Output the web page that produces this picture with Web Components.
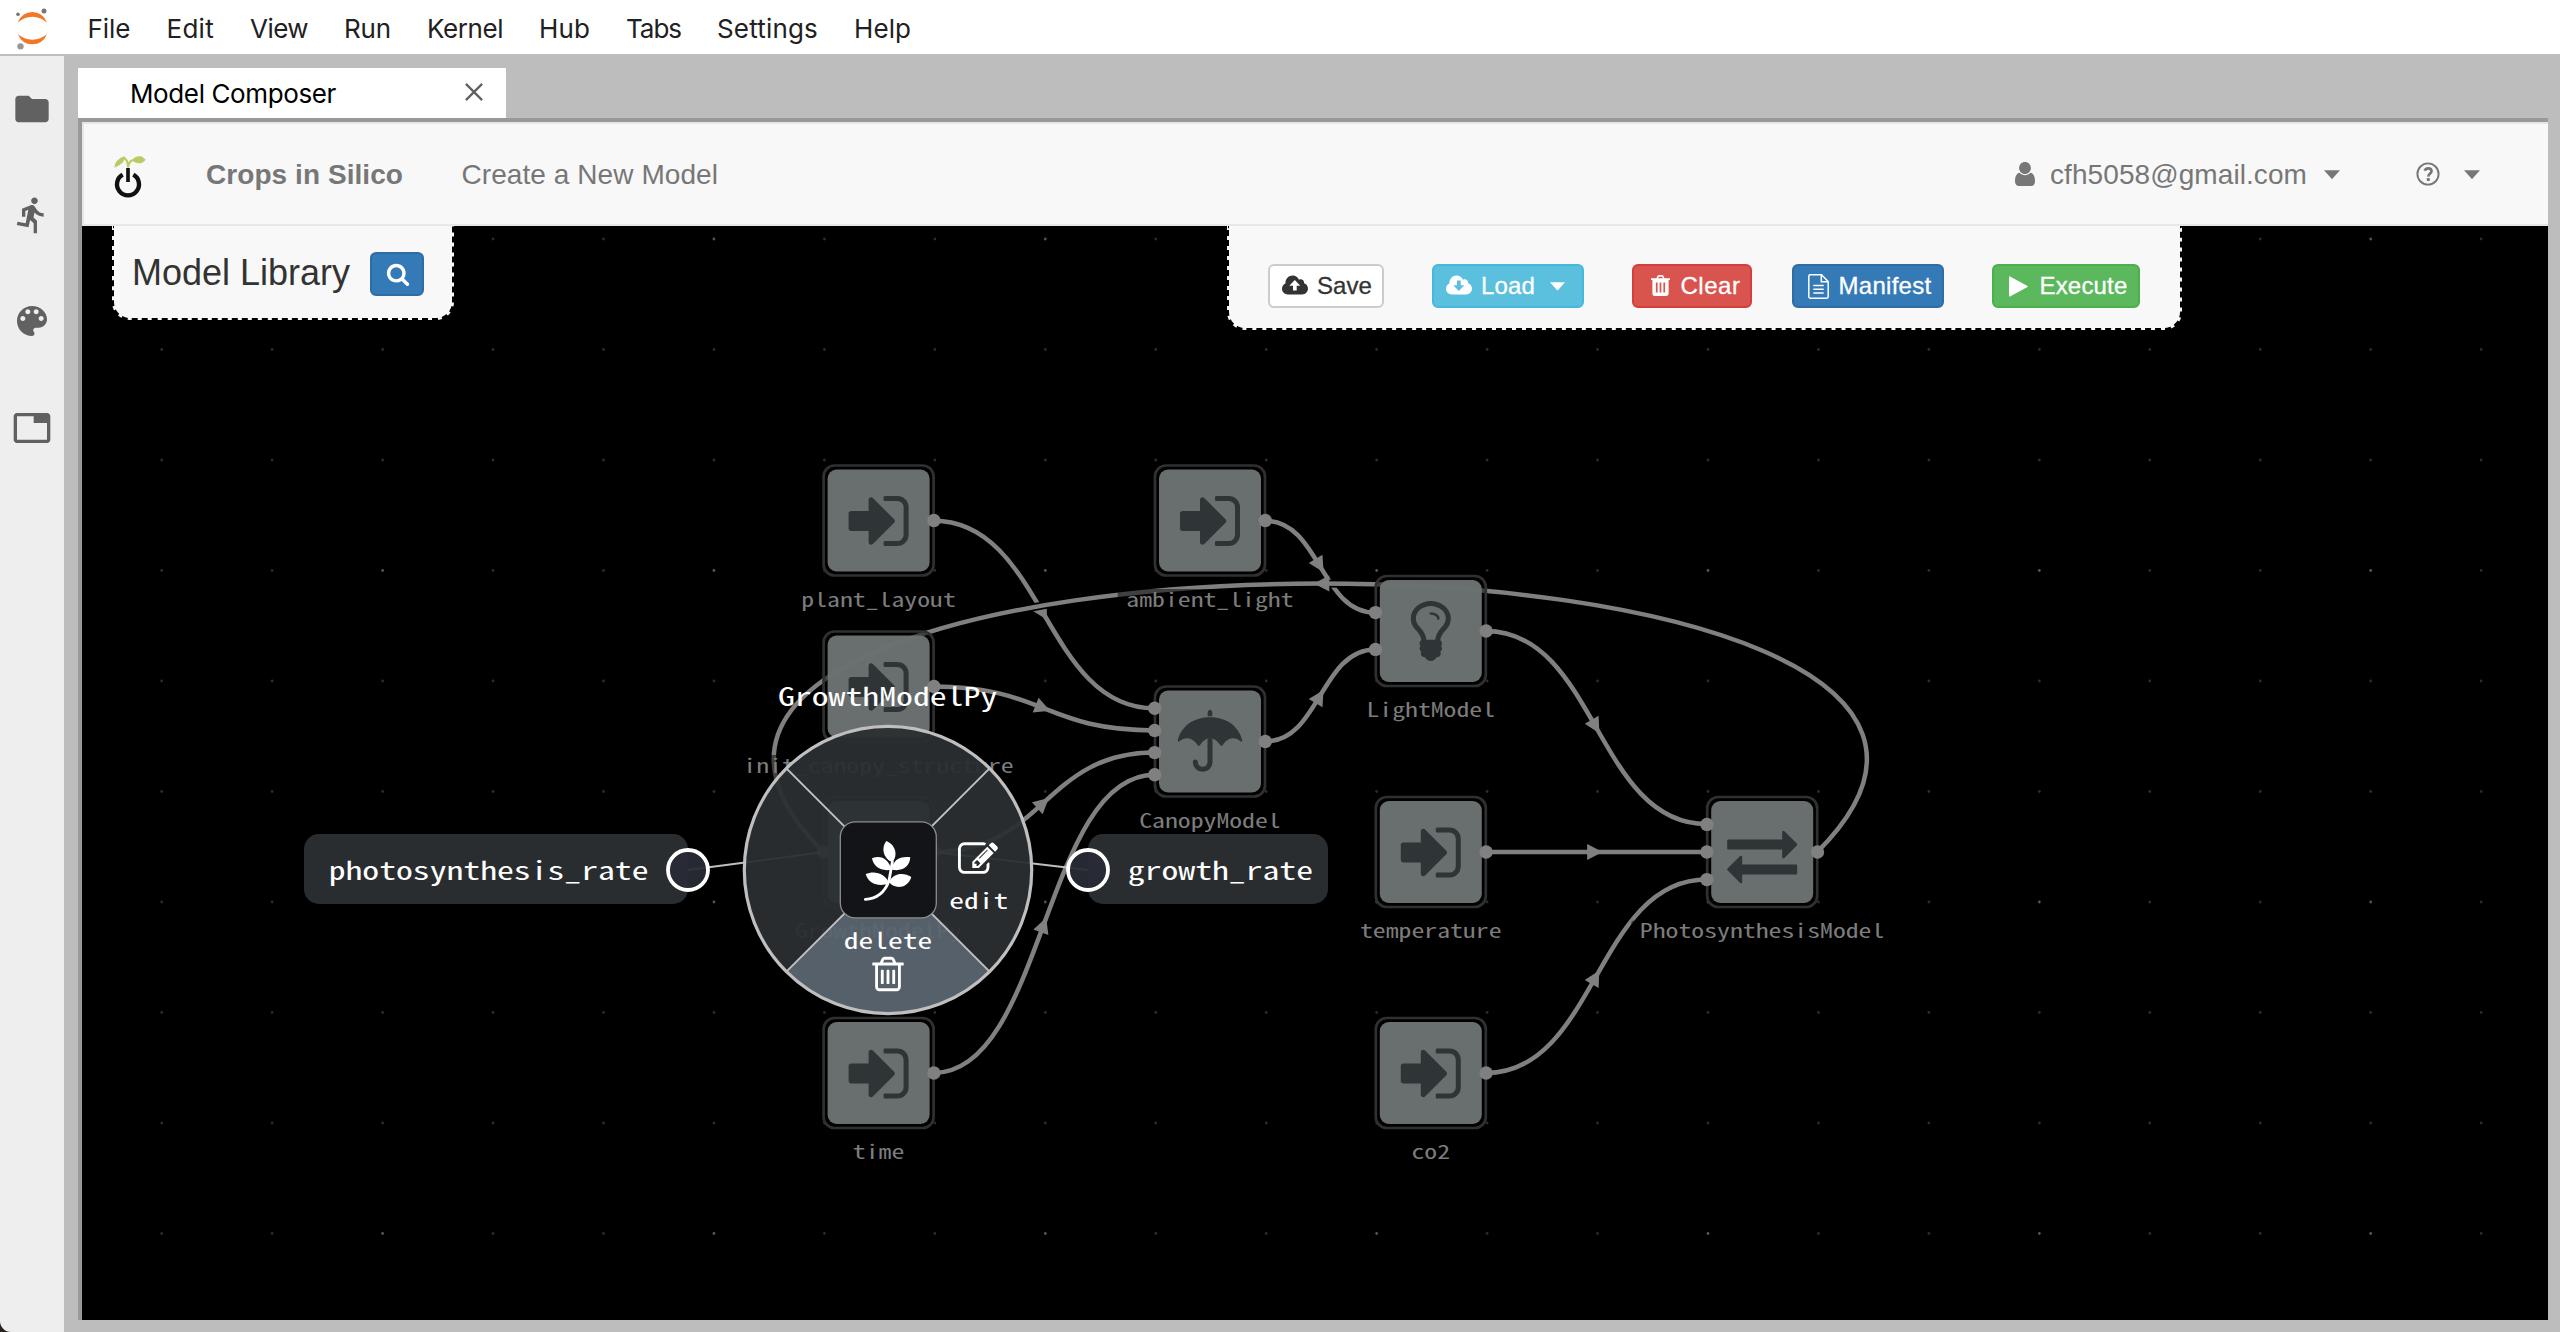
<!DOCTYPE html>
<html lang="en">
<head>
<meta charset="utf-8">
<title>Model Composer</title>
<style>
html,body{margin:0;height:100%;background:#bdbdbd;overflow:hidden}
</style>
</head>
<body>
<lab-shell></lab-shell>
<script>
const GLYPH = {
  folder: ['0 0 24 24','<path d="M10 4H4c-1.1 0-1.99.9-1.99 2L2 18c0 1.1.9 2 2 2h16c1.1 0 2-.9 2-2V8c0-1.1-.9-2-2-2h-8l-2-2z"/>'],
  run: ['0 0 24 24','<path d="M13.49 5.48c1.1 0 2-.9 2-2s-.9-2-2-2-2 .9-2 2 .9 2 2 2zm-3.6 13.9l1-4.4 2.1 2v6h2v-7.5l-2.1-2 .6-3c1.3 1.5 3.3 2.5 5.5 2.5v-2c-1.9 0-3.5-1-4.3-2.4l-1-1.6c-.4-.6-1-1-1.7-1-.3 0-.5.1-.8.1l-5.2 2.2v4.7h2v-3.4l1.8-.7-1.6 8.1-4.9-1-.4 2 7 1.4z"/>'],
  palette: ['0 0 24 24','<path d="M12 3c-4.97 0-9 4.03-9 9s4.03 9 9 9c.83 0 1.5-.67 1.5-1.5 0-.39-.15-.74-.39-1.01-.23-.26-.38-.61-.38-.99 0-.83.67-1.5 1.5-1.5H16c2.76 0 5-2.24 5-5 0-4.42-4.03-8-9-8zm-5.5 9c-.83 0-1.5-.67-1.5-1.5S5.67 9 6.5 9 8 9.67 8 10.5 7.33 12 6.5 12zm3-4C8.67 8 8 7.33 8 6.5S8.67 5 9.5 5s1.5.67 1.5 1.5S10.33 8 9.5 8zm5 0c-.83 0-1.5-.67-1.5-1.5S13.67 5 14.5 5s1.5.67 1.5 1.5S15.33 8 14.5 8zm3 4c-.83 0-1.5-.67-1.5-1.5S16.67 9 17.5 9s1.5.67 1.5 1.5-.67 1.5-1.5 1.5z"/>'],
  tab: ['0 0 24 24','<path d="M21 3H3c-1.1 0-2 .9-2 2v14c0 1.1.9 2 2 2h18c1.1 0 2-.9 2-2V5c0-1.1-.9-2-2-2zm0 16H3V5h10v4h8v10z"/>'],
  close: ['0 0 18 18','<path d="M.9.9l16.2 16.2M17.100.9L.9 17.100" fill="none" stroke="currentColor" stroke-width="2.300"/>'],
  jupyter: ['0 0 96 126','<g transform="translate(-48 -23)"><path fill="#f37726" d="M53 67Q66 35 97 35Q128 35 141 67Q122 49 97 49Q72 49 53 67zM53 101Q72 118 97 118Q122 118 141 101Q128 132 97 132Q66 132 53 101z"/><circle cx="132" cy="32" r="7.500" fill="#767677"/><circle cx="54" cy="42" r="5.500" fill="#767677"/><circle cx="61.500" cy="138" r="9.500" fill="#989798"/></g>'],
  sprout: ['0 0 96 122','<g transform="translate(-342 -467)"><path d="M368 523A33 33 0 1 0 400 523" fill="none" stroke="#111" stroke-width="13"/><path d="M384 503V545" stroke="#111" stroke-width="11"/><path d="M384 502Q386 484 398 479M384 500Q384 480 372 472" fill="none" stroke="#b9cb62" stroke-width="6"/><path d="M343 502Q344 478 374 467Q376 490 343 502zM396 480Q405 466 424 468L437 478Q428 490 414 489Q402 488 396 480z" fill="#b9cb62"/></g>'],
  search: ['0 0 1792 1792','<path d="M1216 832q0-185-131.500-316.500t-316.500-131.500-316.500 131.500-131.500 316.500 131.500 316.500 316.500 131.500 316.500-131.500 131.500-316.500zm512 832q0 52-38 90t-90 38q-54 0-90-38l-343-342q-179 124-399 124-143 0-273.500-55.500t-225-150-150-225-55.500-273.500 55.500-273.500 150-225 225-150 273.500-55.500 273.500 55.500 225 150 150 225 55.500 273.500q0 220-124 399l343 343q37 37 37 90z"/>'],
  user: ['0 0 20 24','<path d="M10 0c3.300 0 5.900 2.700 5.900 6s-2.600 6-5.900 6-5.900-2.700-5.900-6S6.700 0 10 0zM4.600 10.800C6 12.300 7.900 13.200 10 13.200s4-.9 5.400-2.400C18.900 11.300 20 15.500 20 19.500c0 2.700-1.600 4.500-3.900 4.500H3.900C1.600 24 0 22.200 0 19.500c0-4 1.100-8.200 4.600-8.700z"/>'],
  caret: ['0 0 16 9','<path d="M0 .2H16L8.600 8.600Q8 9.200 7.400 8.600z"/>'],
  help: ['0 0 24 24','<circle cx="12" cy="12" r="10.600" fill="none" stroke="currentColor" stroke-width="1.900"/><path d="M8.600 8.600Q9.700 6.300 12.200 6.300C14.300 6.300 15.500 7.600 15.500 9.200C15.500 11.500 12.500 11.700 12.300 14.600" fill="none" stroke="currentColor" stroke-width="2.700"/><rect x="10.800" y="16.100" width="3" height="2.900" rx=".4"/>'],
  cloudUp: ['0 0 26 20','<path fill-rule="evenodd" d="M6 19.500C2.600 19.500 0 16.900 0 13.800C0 11.400 1.400 9.500 3.400 8.600C3.200 3.700 6.600.4 10.600.4C13.600.4 16 2.200 17 4.700C19.500 3.400 22.300 5.200 22.100 8.200C24.500 9 26 11.200 26 13.600C26 16.900 23.400 19.500 20.100 19.500zM12.800 5.100L7.300 10.700H11V15.600H14.700V10.700H18.300z"/>'],
  cloudDown: ['0 0 26 20','<path fill-rule="evenodd" d="M6 19.500C2.600 19.500 0 16.900 0 13.800C0 11.400 1.400 9.500 3.400 8.600C3.200 3.700 6.600.4 10.600.4C13.600.4 16 2.200 17 4.700C19.500 3.400 22.300 5.200 22.100 8.200C24.500 9 26 11.200 26 13.600C26 16.900 23.400 19.500 20.100 19.500zM12.800 15.900L7.300 10.300H11V5.400H14.700V10.300H18.300z"/>'],
  trash: ['0 0 1792 1792','<path d="M704 736v576q0 14-9 23t-23 9h-64q-14 0-23-9t-9-23v-576q0-14 9-23t23-9h64q14 0 23 9t9 23zm256 0v576q0 14-9 23t-23 9h-64q-14 0-23-9t-9-23v-576q0-14 9-23t23-9h64q14 0 23 9t9 23zm256 0v576q0 14-9 23t-23 9h-64q-14 0-23-9t-9-23v-576q0-14 9-23t23-9h64q14 0 23 9t9 23zm128 724v-948h-896v948q0 22 7 40.500t14.500 27 10.500 8.500h832q3 0 10.500-8.500t14.500-27 7-40.500zm-672-1076h448l-48-117q-7-9-17-11h-317q-10 2-17 11zm928 32v64q0 14-9 23t-23 9h-96v948q0 83-47 143.500t-113 60.500h-832q-66 0-113-58.500t-47-141.500v-952h-96q-14 0-23-9t-9-23v-64q0-14 9-23t23-9h309l70-167q15-37 54-63t79-26h320q40 0 79 26t54 63l70 167h309q14 0 23 9t9 23z"/>'],
  trashSolid: ['0 0 19 21','<path fill-rule="evenodd" d="M0 3.200H5.500L6.300 1.200Q6.800 0 8 0H11Q12.200 0 12.700 1.200L13.500 3.200H19V5H17.600V18.300Q17.600 21 15.200 21H3.800Q1.400 21 1.400 18.300V5H0zM7.200 3.200H11.800L11.200 1.800H7.800zM4.900 7.500V17.500H6.600V7.500zM8.650 7.500V17.500H10.350V7.500zM12.400 7.500V17.500H14.100V7.500z"/>'],
  file: ['0 0 21 25','<path d="M.8 2.200Q.8.8 2.200.8H13.500L20.200 7.500V22.800Q20.200 24.200 18.800 24.200H2.200Q.8 24.200.8 22.800zM13.300 1V7.700H20M5.300 11.500H15.700M5.300 15.200H15.700M5.300 18.900H15.700" fill="none" stroke="currentColor" stroke-width="1.500"/>'],
  play: ['0 0 19 22','<path d="M0 1.200Q0 0 1 .5L18.500 10.400Q19.300 11 18.500 11.600L1 21.500Q0 22 0 20.800z"/>'],
  signIn: ['0 0 1792 1792','<path d="M1312 896q0 26-19 45l-544 544q-19 19-45 19t-45-19-19-45v-288h-448q-26 0-45-19t-19-45v-384q0-26 19-45t45-19h448v-288q0-26 19-45t45-19 45 19l544 544q19 19 19 45zm352-352v704q0 119-84.500 203.500t-203.500 84.500h-320q-13 0-22.500-9.500t-9.500-22.500q0-4-1-20t-.5-26.500 3-23.500 10-19.500 20.500-6.500h320q66 0 113-47t47-113v-704q0-66-47-113t-113-47h-312l-11.500-1-11.500-3-8-5.500-7-9-2-13.500q0-4-1-20t-.5-26.500 3-23.500 10-19.500 20.500-6.500h320q119 0 203.500 84.500t84.500 203.500z"/>'],
  bulb: ['0 0 1792 1792','<path d="M1120 576q0 13-9.500 22.500t-22.500 9.500-22.500-9.500-9.500-22.500q0-46-54-71t-106-25q-13 0-22.500-9.500t-9.500-22.500 9.500-22.500 22.500-9.500q50 0 99.500 16t87 54 37.500 90zm160 0q0-72-34.500-134t-90-101.500-123-62-136.500-22.500-136.500 22.500-123 62-90 101.500-34.500 134q0 101 68 180 10 11 30.500 33t30.500 33q128 153 141 298h228q13-145 141-298 10-11 30.500-33t30.500-33q68-79 68-180zm128 0q0 155-103 268-45 49-74.500 87t-59.500 95.500-34 107.500q47 28 47 82 0 37-25 64 25 27 25 64 0 52-45 81 13 23 13 47 0 46-31.500 71t-77.500 25q-20 44-60 70t-87 26-87-26-60-70q-46 0-77.500-25t-31.500-71q0-24 13-47-45-29-45-81 0-37 25-64-25-27-25-64 0-54 47-82-4-50-34-107.500t-59.500-95.500-74.500-87q-103-113-103-268 0-99 44.500-184.500t117-142 164-89 186.500-32.500 186.500 32.500 164 89 117 142 44.500 184.500z"/>'],
  exchange: ['0 0 1792 1792','<path d="M1792 1184v192q0 13-9.500 22.500t-22.500 9.500h-1376v192q0 13-9.500 22.500t-22.500 9.500q-12 0-24-10l-319-320q-9-9-9-22 0-14 9-23l320-320q9-9 23-9 13 0 22.500 9.500t9.500 22.500v192h1376q13 0 22.500 9.500t9.500 22.500zm0-544q0 14-9 23l-320 320q-9 9-23 9-13 0-22.500-9.500t-9.500-22.500v-192h-1376q-13 0-22.500-9.500t-9.500-22.500v-192q0-13 9.500-22.500t22.500-9.500h1376v-192q0-14 9-23t23-9q12 0 24 10l319 319q9 9 9 23z"/>'],
  pencil: ['0 0 1792 1792','<path d="M888 1184l116-116-152-152-116 116v56h96v96h56zm440-720q-16-16-33 1l-350 350q-17 17-1 33t33-1l350-350q17-17 1-33zm80 594v190q0 119-84.500 203.500t-203.500 84.500h-832q-119 0-203.500-84.500t-84.500-203.500v-832q0-119 84.500-203.500t203.500-84.500h832q63 0 117 25 15 7 18 23 3 17-9 29l-49 49q-14 14-32 8-23-6-45-6h-832q-66 0-113 47t-47 113v832q0 66 47 113t113 47h832q66 0 113-47t47-113v-126q0-13 9-22l64-64q15-15 35-7t20 29zm-96-738l288 288-672 672h-288v-288zm444 132l-92 92-288-288 92-92q28-28 68-28t68 28l152 152q28 28 28 68t-28 68z"/>']
};

const define = (name, html, setup) => {
  const t = document.createElement('template');
  t.innerHTML = html;
  customElements.define(name, class extends HTMLElement {
    connectedCallback() {
      if (this.shadowRoot) return;
      this.attachShadow({mode: 'open'}).append(t.content.cloneNode(true));
      if (setup) setup.call(this, this.shadowRoot);
    }
  });
};

/* Icon: name, w, h */
define('ui-icon', '<style>:host{display:block;flex:none}svg{display:block;fill:currentColor;overflow:visible}</style>', function (r) {
  const [vb, body] = GLYPH[this.getAttribute('name')];
  const w = this.getAttribute('w'), h = this.getAttribute('h') || w;
  r.innerHTML += `<svg width="${w}" height="${h}" viewBox="${vb}" preserveAspectRatio="none">${body}</svg>`;
});

/* Single-line text tracked to a given advance width */
define('ui-text', '<style>:host{display:block;flex:none;white-space:nowrap}span{display:inline-block}</style><span><slot></slot></span>', function (r) {
  const w = +this.getAttribute('w'), s = r.querySelector('span');
  const nodes = r.querySelector('slot').assignedNodes({flatten: true});
  const length = nodes.reduce((n, node) => n + node.textContent.length, 0);
  const natural = s.getBoundingClientRect().width;
  s.style.letterSpacing = ((w - natural) / length) + 'px';
  this.style.width = w + 'px';
});

define('lab-menubar', `<style>
:host{display:flex;align-items:center;height:54px;background:#fff;border-bottom:2px solid #bdbdbd;color:#212121;font:26px/54px Inter,sans-serif}
.logo{padding:0 21.500px 2px 16px;margin-top:5px}
nav{display:flex}
ui-text{padding:4.500px 18px 0;height:54px}
</style>
<div class="logo"><ui-icon name="jupyter" w="32" h="42"></ui-icon></div>
<nav><ui-text w="43">File</ui-text><ui-text w="47.5">Edit</ui-text><ui-text w="58">View</ui-text><ui-text w="47">Run</ui-text><ui-text w="76">Kernel</ui-text><ui-text w="51">Hub</ui-text><ui-text w="55">Tabs</ui-text><ui-text w="101">Settings</ui-text><ui-text w="57">Help</ui-text></nav>`);

define('lab-sidebar', `<style>
:host{display:flex;flex-direction:column;width:64px;flex:none;background:#eee;color:#616161;border-bottom-left-radius:11px}
div{height:106.200px;display:flex;align-items:center;justify-content:center}
div:first-child{height:102.400px}
</style>
<div><ui-icon name="folder" w="40"></ui-icon></div><div><ui-icon name="run" w="40"></ui-icon></div><div><ui-icon name="palette" w="40"></ui-icon></div><div><ui-icon name="tab" w="40"></ui-icon></div>`);

define('lab-tab', `<style>
:host{display:flex;align-items:center;box-sizing:border-box;width:428px;height:50px;background:#fff;color:#000;font:26px/50px Inter,sans-serif;padding:0 23px 0 52px;justify-content:space-between}
ui-icon{color:#616161;margin-bottom:2px}
ui-text{padding-top:1px}
</style><ui-text w="206"><slot></slot></ui-text><ui-icon name="close" w="18"></ui-icon>`);

define('app-navbar', `<style>
:host{display:flex;align-items:center;height:100px;background:#f8f8f8;border:2px solid #e7e7e7;border-right:0;color:#777;font:28px/40px "Liberation Sans",Arial,sans-serif}
.logo{margin:5px 60px 0 30px}
ui-text{padding-top:2px}
b{margin-right:58.500px}
.user{display:flex;align-items:center;margin-left:auto}
.user ui-icon:first-child{margin-right:15px}
.user ui-text{margin-right:17px}
.help{display:flex;align-items:center;margin:0 68px 0 76px;gap:24px}
</style>
<div class="logo"><ui-icon name="sprout" w="32" h="40.7"></ui-icon></div>
<b><ui-text w="197">Crops in Silico</ui-text></b><ui-text w="256.5">Create a New Model</ui-text>
<div class="user"><ui-icon name="user" w="20" h="24"></ui-icon><ui-text w="257">cfh5058@gmail.com</ui-text><ui-icon name="caret" w="16" h="9"></ui-icon></div>
<div class="help"><ui-icon name="help" w="24"></ui-icon><ui-icon name="caret" w="16" h="9"></ui-icon></div>`);

/* Bootstrap-like button; icon and caption are slotted in */
define('app-button', `<style>
:host{display:flex;align-items:center;box-sizing:border-box;height:44px;flex:none;border:2px solid var(--edge);background:var(--fill);color:var(--ink,#fff);border-radius:6px;font:24px/40px "Liberation Sans",Arial,sans-serif}
</style><slot></slot>`);

define('library-panel', `<style>
:host{display:flex;align-items:flex-start;box-sizing:border-box;width:342px;height:94px;background:#f8f8f8;border:2px dashed #000;border-top:0;border-radius:0 0 18px 18px;padding:26px 0 0 18px;color:#333;font:36px/44px "Liberation Sans",Arial,sans-serif}
ui-text{margin:-1.500px 20px 0 0}
app-button{--fill:#337ab7;--edge:#2e6da4;width:54px}
ui-icon{margin:0 0 0 14px}
</style><ui-text w="218">Model Library</ui-text><app-button><ui-icon name="search" w="24"></ui-icon></app-button>`);

define('action-panel', `<style>
:host{display:flex;align-items:flex-start;box-sizing:border-box;width:955px;height:104px;background:#f8f8f8;border:2px dashed #000;border-top:0;border-radius:0 0 18px 18px;padding:38px 0 0 39px}
.save{--fill:#fff;--edge:#ccc;--ink:#333;width:116px;margin-right:48px}
.load{--fill:#5bc0de;--edge:#46b8da;width:152px;margin-right:48px}
.clear{--fill:#d9534f;--edge:#d43f3a;width:120px;margin-right:40px}
.manifest{--fill:#337ab7;--edge:#2e6da4;width:152px;margin-right:48px}
.execute{--fill:#5cb85c;--edge:#4cae4c;width:148px}
ui-text{-webkit-text-stroke:.3px currentColor}
.c{margin:-2px 9px 0 12.500px}
</style>
<app-button class="save"><ui-icon class="c" name="cloudUp" w="26" h="20"></ui-icon><ui-text w="55">Save</ui-text></app-button>
<app-button class="load"><ui-icon class="c" name="cloudDown" w="26" h="20"></ui-icon><ui-text w="54">Load</ui-text><ui-icon style="margin-left:14.5px" name="caret" w="15" h="8.5"></ui-icon></app-button>
<app-button class="clear"><ui-icon style="margin:-1px 11px 0 17px" name="trashSolid" w="19" h="21"></ui-icon><ui-text w="60">Clear</ui-text></app-button>
<app-button class="manifest"><ui-icon style="margin:0 10px 0 14px" name="file" w="21" h="25"></ui-icon><ui-text w="93">Manifest</ui-text></app-button>
<app-button class="execute"><ui-icon style="margin:0 12px 0 15px" name="play" w="19" h="21"></ui-icon><ui-text w="88">Execute</ui-text></app-button>`);

/* Data-flow graph with a radial menu over the selected node */
define('graph-canvas', `<style>
:host{display:block}
svg{display:block}
text{font-family:"Noto Sans Mono CJK JP","Noto Sans Mono CJK SC","DejaVu Sans Mono",monospace;white-space:pre}
</style>`, function (r) {
  const icon = (name, cx, cy, size, color) => {
    const k = size / 1792;
    return `<g fill="${color}" transform="translate(${cx - size / 2} ${cy - size / 2}) scale(${k})">${GLYPH[name][1]}</g>`;
  };
  /* The face has half-em glyphs; widen them to the requested advance */
  const label = (s, cx, y, adv, fill) => {
    const w = adv * s.length, size = adv * 1.5, kx = adv / (size / 2);
    return `<text transform="translate(${cx - w / 2} ${y}) scale(${kx} 1)" font-size="${size}" fill="${fill}">${s}</text>`;
  };
  let o = '';
  for (let i = 0; i < 23; i++) for (let j = 0; j < 10; j++) {
    const bright = i % 3 === 2 && j % 3 === 0;
    o += `<circle cx="${161.7 + i * 110.45}" cy="${239 + j * 110.5}" r="1.4" fill="${bright ? '#555' : '#2c2c2c'}"/>`;
  }
  const edge = (x1, y1, x2, y2) => {
    let c1x = (x1 + x2) / 2, c1y = y1, c2x = c1x, c2y = y2;
    if (x2 < x1) { const f = (x1 - x2) * .36; c1x = x1 + f; c2x = x2 - f; c1y = y1 - f; c2y = y2 - f; }
    const d = `M${x1} ${y1}C${c1x} ${c1y} ${c2x} ${c2y} ${x2} ${y2}`;
    const mx = (x1 + 3 * c1x + 3 * c2x + x2) / 8, my = (y1 + 3 * c1y + 3 * c2y + y2) / 8;
    const a = Math.atan2(y2 + c2y - c1y - y1, x2 + c2x - c1x - x1) * 180 / Math.PI;
    return `<path d="${d}" fill="none" stroke="#000" stroke-width="8"/><path d="${d}" fill="none" stroke="#808080" stroke-width="4.5"/><path d="M-9-8L6.500 0L-9 8z" fill="#808080" transform="translate(${mx} ${my}) rotate(${a})"/>`;
  };
  o += edge(933.5, 520.7, 1154.5, 708.3) + edge(933.5, 686.5, 1154.5, 730.4) + edge(933.5, 852, 1154.5, 752.6)
    + edge(933.5, 1073, 1154.5, 774.7) + edge(1265, 520.7, 1375.5, 612.7) + edge(1265, 741.5, 1375.5, 649.4)
    + edge(1485.7, 631, 1706.6, 824) + edge(1485.7, 852, 1706.6, 852) + edge(1485.7, 1073, 1706.6, 879.5)
    + edge(1817.3, 852, 823.3, 852);
  const umbrella = (cx, cy) => `<g transform="translate(${cx} ${cy})"><path fill="#2f3436" d="M-32.200-1.500C-28-17-15-24.300 0-24.300S28-17 32.200-1.500Q32.300 1 30.600-.2C25-5 18-4 13.300 2.800Q11.500 6 9.800 3C4-5.500-4-5.500-9.600 3Q-11.300 6-13 2.800C-18-4-25-5-30.600-.2Q-32.300 1-32.200-1.500zM-2.300-25.200V-29Q-2-31.700 0-31.700T2.300-29V-25.200z"/><path fill="none" stroke="#2f3436" stroke-width="5" stroke-linecap="round" d="M0-1V20.500A7.200 7.200 0 0 1-14.700 20.500"/></g>`;
  const node = (name, x, y, kind, ins, out) => {
    let s = `<rect x="${x - 55}" y="${y - 55}" width="110" height="110" rx="11" fill="#000" fill-opacity=".5" stroke="#303030" stroke-width="2.7"/>
<rect x="${x - 51}" y="${y - 51}" width="102" height="102" rx="9" fill="#6d7272" fill-opacity=".96"/>`;
    s += kind === 'umbrella' ? umbrella(x, y) : icon(kind, x, y + (kind === 'signIn' ? 0.5 : kind === 'exchange' ? 2.5 : 0), 70, '#2f3436');
    for (const p of ins) s += `<circle cx="${x - 55.3}" cy="${y + p}" r="6.7" fill="#808080"/>`;
    if (out) s += `<circle cx="${x + 55.3}" cy="${y}" r="6.7" fill="#808080"/>`;
    const lw = 12.9 * name.length + 17;
    s += `<rect x="${x - lw / 2}" y="${y + 68.5}" width="${lw}" height="24" rx="3" fill="#000" fill-opacity=".5"/>` + label(name, x, y + 86.3, 12.88, '#7c7c7c');
    return s;
  };
  o += node('plant_layout', 878.6, 520.5, 'signIn', [], 1)
    + node('init_canopy_structure', 878.6, 686.5, 'signIn', [], 1)
    + node('GrowthModelPy', 878.6, 852, 'bulb', [0], 1)
    + node('time', 878.6, 1073, 'signIn', [], 1)
    + node('ambient_light', 1210, 520.5, 'signIn', [], 1)
    + node('CanopyModel', 1210, 741.5, 'umbrella', [-33.2, -11.1, 11.1, 33.2], 1)
    + node('LightModel', 1430.8, 631, 'bulb', [-18.4, 18.4], 1)
    + node('temperature', 1430.8, 852, 'signIn', [], 1)
    + node('co2', 1430.8, 1073, 'signIn', [], 1)
    + node('PhotosynthesisModel', 1762.2, 852, 'exchange', [-27.6, 0, 27.6], 1);

  o += `<path d="M688 870L823.300 852M1088 870L933.700 852" stroke="#bfbfbf" stroke-width="2"/>`;
  o += `<path d="M888 870L786.400 971.600A143.700 143.700 0 1 1 989.600 971.600z" fill="#2a2e32" fill-opacity=".95"/>
<path d="M888 870L786.400 971.600A143.700 143.700 0 0 0 989.600 971.600z" fill="#5b6570" fill-opacity=".95"/>`;
  o += `<path d="M786.400 768.400L989.600 971.600M989.600 768.400L786.400 971.600" stroke="#bfbfbf" stroke-width="2"/>
<circle cx="888" cy="870" r="143.7" fill="none" stroke="#bfbfbf" stroke-width="3.200"/>
<rect x="840.3" y="821.9" width="96" height="96" rx="15" fill="#131418" stroke="#8c8c8c" stroke-width="1.3"/>
<g transform="translate(720 700) scale(.33333)" fill="#fff"><path d="M436 598Q488 595 507 542L517 486" fill="none" stroke="#fff" stroke-width="8.5" stroke-linecap="round"/>
<path d="M517 487C487 475 484 440 499 423C526 434 536 465 517 487zM456 475C482 463 508 478 514 509C485 515 461 502 456 475zM571 472C540 468 518 480 516 509C545 515 569 502 571 472zM437 522C462 511 497 519 507 550C480 562 445 553 437 522zM574 531C550 516 518 520 507 547C525 569 563 566 574 531z"/></g>`;
  o += icon('pencil', 978, 859.5, 40, '#fff') + label('edit', 978.7, 909, 14.73, '#fff')
    + icon('trash', 888, 974, 40, '#fff') + label('delete', 888, 948.7, 14.73, '#fff')
    + label('GrowthModelPy', 887.7, 706, 16.88, '#fff');
  o += `<rect x="304" y="834" width="384" height="70" rx="15" fill="#2a2e32" fill-opacity=".97"/>
<rect x="1088" y="834" width="240" height="70" rx="15" fill="#2a2e32" fill-opacity=".97"/>
<circle cx="688" cy="870" r="20" fill="#282b35" fill-opacity=".94" stroke="#fff" stroke-width="3.8"/>
<circle cx="1088" cy="870" r="20" fill="#282b35" fill-opacity=".94" stroke="#fff" stroke-width="3.8"/>`;
  o += label('photosynthesis_rate', 488.7, 880, 16.85, '#fff') + label('growth_rate', 1220.5, 880, 16.85, '#fff');
  r.innerHTML += `<svg width="2466" height="1094" viewBox="82 226 2466 1094">${o}</svg>`;
});

define('composer-app', `<style>
:host{display:block;box-sizing:border-box;height:1202px;border:solid #999;border-width:4px 0 0 4px;background:#000}
.stage{position:relative;height:1094px;overflow:hidden}
library-panel{position:absolute;left:30px;top:0}
action-panel{position:absolute;left:1144.500px;top:0}
</style><app-navbar></app-navbar><div class="stage"><graph-canvas></graph-canvas><library-panel></library-panel><action-panel></action-panel></div>`);

define('lab-shell', `<style>
:host{display:flex;flex-direction:column;height:1332px;background:#bdbdbd}
.body{display:flex;flex:1;background:linear-gradient(#2a2220,#2a2220) 0 100%/20px 20px no-repeat}
main{flex:1;padding:12px 12px 0 14px}
</style><lab-menubar></lab-menubar><div class="body"><lab-sidebar></lab-sidebar><main><lab-tab>Model Composer</lab-tab><composer-app></composer-app></main></div>`);
</script>
</body>
</html>
